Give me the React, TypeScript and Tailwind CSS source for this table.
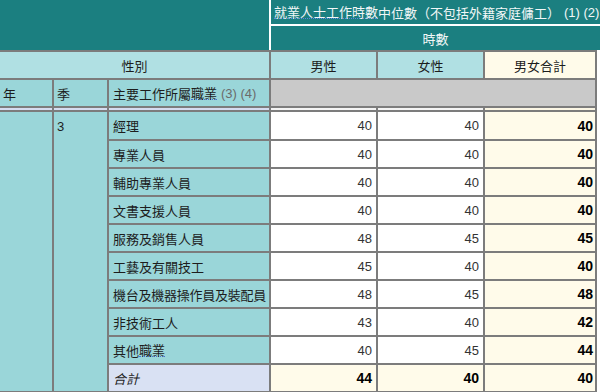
import React from "react";

const rows: { label: React.ReactNode; m: number; f: number; t: number }[] = [
  { label: "經理", m: 40, f: 40, t: 40 },
  { label: "專業人員", m: 40, f: 40, t: 40 },
  { label: "輔助專業人員", m: 40, f: 40, t: 40 },
  { label: "文書支援人員", m: 40, f: 40, t: 40 },
  { label: "服務及銷售人員", m: 48, f: 45, t: 45 },
  { label: "工藝及有關技工", m: 45, f: 40, t: 40 },
  { label: <span className="tracking-[-0.25px]">機台及機器操作員及裝配員</span>, m: 48, f: 45, t: 48 },
  { label: "非技術工人", m: 43, f: 40, t: 42 },
  {
    label: (
      <>
        其他<span className="border-b border-dotted border-[#4a74d6]">職業</span>
      </>
    ),
    m: 40,
    f: 45,
    t: 44,
  },
];

const cjk = "font-['Noto_Sans_CJK_TC','Liberation_Sans',sans-serif]";
const num = "font-['Liberation_Sans',Arial,sans-serif]";

export default function App() {
  return (
    <div className={`w-[600px] h-[392px] overflow-hidden bg-white text-[13px] leading-none ${cjk}`}>
      {/* top teal header */}
      <div className="flex h-[50px] w-[600px] bg-[#1b7f80] text-[#f2f7f7]">
        <div className="w-[269px] shrink-0" />
        <div className="w-[2px] shrink-0 bg-white" />
        <div className="flex flex-1 flex-col">
          <div className="flex h-[24px] items-center whitespace-nowrap pl-[3px]">
            <span className="border-b border-dotted border-[#5b86e0]">就業人士工作時數</span>
            中位數（不包括外籍家庭傭工）
            <span className={`${num} ml-[4px] text-[13px]`}>(1) (2)</span>
          </div>
          <div className="h-[2px] bg-white" />
          <div className="flex h-[24px] items-center justify-center">時數</div>
        </div>
      </div>

      {/* body grid */}
      <div className="w-[597px] bg-[#7c7c7c] pt-[2px] pr-[2px] pb-[2px]">
        <div className="grid grid-cols-[52px_53px_160px_105px_105px_110px] grid-rows-[26px_26px_2px_27px_26px_26px_26px_26px_26px_26px_26px_26px_26px] gap-[2px] text-[#1d1d1d]">
          {/* row A */}
          <div className="col-span-3 flex items-center justify-center bg-[#b0e0e3]">性別</div>
          <div className="flex items-center justify-center bg-[#b0e0e3]">男性</div>
          <div className="flex items-center justify-center bg-[#b0e0e3]">女性</div>
          <div className="flex items-center justify-center bg-[#fffbea]">男女合計</div>

          {/* row B */}
          <div className="flex items-center bg-[#9ad6d9] pl-[3px]">年</div>
          <div className="flex items-center bg-[#9ad6d9] pl-[3px]">季</div>
          <div className="flex items-center bg-[#9ad6d9] pl-[4px] whitespace-nowrap">
            主要工作所屬<span className="border-b border-dotted border-[#4a74d6]">職業</span>
            <span className={`${num} ml-[4px] text-[#6b6b6b]`}>(3) (4)</span>
          </div>
          <div className="col-span-3 bg-[#c9c9c9]" />

          {/* band */}
          <div className="bg-[#d6dcf0]" />
          <div className="bg-[#d6dcf0]" />
          <div className="bg-[#d6dcf0]" />
          <div className="bg-[#f4f4f4]" />
          <div className="bg-[#f4f4f4]" />
          <div className="bg-[#fbf6e4]" />

          {/* year & quarter spanning */}
          <div className="row-span-10 bg-[#9ad6d9]" />
          <div className={`row-span-10 bg-[#9ad6d9] pl-[3px] pt-[8px] ${num}`}>3</div>

          {rows.map((r, i) => (
            <React.Fragment key={i}>
              <div className="flex items-center bg-[#9ad6d9] pl-[4px] whitespace-nowrap">{r.label}</div>
              <div className={`flex items-center justify-end bg-white pr-[4px] ${num} text-[#333]`}>{r.m}</div>
              <div className={`flex items-center justify-end bg-white pr-[4px] ${num} text-[#333]`}>{r.f}</div>
              <div className={`flex items-center justify-end bg-[#fffbea] pr-[2px] ${num} text-[14px] font-bold text-black`}>
                {r.t}
              </div>
            </React.Fragment>
          ))}

          {/* total row */}
          <div className="flex items-center bg-[#d9e1f3] pl-[4px] italic">合計</div>
          <div className={`flex items-center justify-end bg-[#fffbea] pr-[4px] ${num} text-[14px] font-bold text-black`}>44</div>
          <div className={`flex items-center justify-end bg-[#fffbea] pr-[4px] ${num} text-[14px] font-bold text-black`}>40</div>
          <div className={`flex items-center justify-end bg-[#fffbea] pr-[2px] ${num} text-[14px] font-bold text-black`}>40</div>
        </div>
      </div>
    </div>
  );
}
